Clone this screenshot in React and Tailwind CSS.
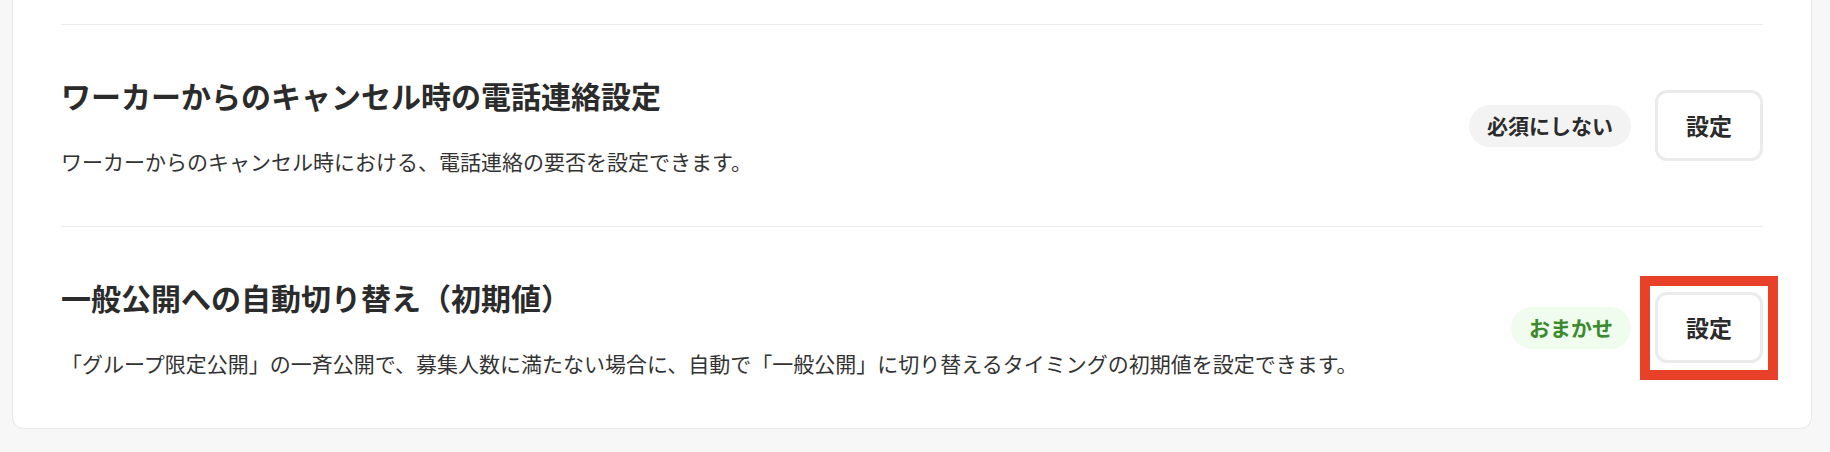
import React from 'react';

const rows = [
  {
    title: 'ワーカーからのキャンセル時の電話連絡設定',
    description: 'ワーカーからのキャンセル時における、電話連絡の要否を設定できます。',
    badge: '必須にしない',
    tone: 'gray',
    highlighted: false,
  },
  {
    title: '一般公開への自動切り替え（初期値）',
    description:
      '「グループ限定公開」の一斉公開で、募集人数に満たない場合に、自動で「一般公開」に切り替えるタイミングの初期値を設定できます。',
    badge: 'おまかせ',
    tone: 'green',
    highlighted: true,
  },
];

function Badge({ label, tone }) {
  const colors =
    tone === 'green'
      ? 'bg-[#effcee] text-[#3b8a2e]'
      : 'bg-[#f3f3f3] text-[#2b2b2b]';
  return (
    <span
      className={`inline-flex h-[42px] items-center rounded-full px-[18px] text-[21px] font-bold leading-none ${colors}`}
    >
      {label}
    </span>
  );
}

function SettingButton({ highlighted }) {
  return (
    <div className="relative">
      <button className="flex h-[71px] w-[108px] items-center justify-center rounded-[12px] border-[3px] border-[#ebebeb] bg-white text-[23px] font-bold leading-none text-[#2b2b2b]">
        設定
      </button>
      {highlighted && (
        <div className="pointer-events-none absolute -left-[15px] -right-[15px] -top-[16px] -bottom-[17px] border-[10px] border-[#e8412a]" />
      )}
    </div>
  );
}

function SettingRow({ row }) {
  return (
    <div className="flex items-center justify-between border-t border-[#ebebeb] py-[48px]">
      <div className="flex flex-col gap-[27px]">
        <h2 className="text-[30px] font-bold leading-[45px] text-[#2b2b2b]">{row.title}</h2>
        <p className="text-[21px] leading-[33px] text-[#333333]">{row.description}</p>
      </div>
      <div className="flex items-center gap-[24px]">
        <Badge label={row.badge} tone={row.tone} />
        <SettingButton highlighted={row.highlighted} />
      </div>
    </div>
  );
}

export default function App() {
  return (
    <div
      className="min-h-[452px] bg-[#f7f7f7] pb-[24px] pl-[12px] pr-[18px]"
      style={{ fontFamily: '"Noto Sans CJK JP", "Noto Sans", sans-serif' }}
    >
      <div className="rounded-b-[12px] border border-t-0 border-[#e8e8e8] bg-white px-[48px] pt-[24px]">
        {rows.map((row) => (
          <SettingRow key={row.title} row={row} />
        ))}
      </div>
    </div>
  );
}
